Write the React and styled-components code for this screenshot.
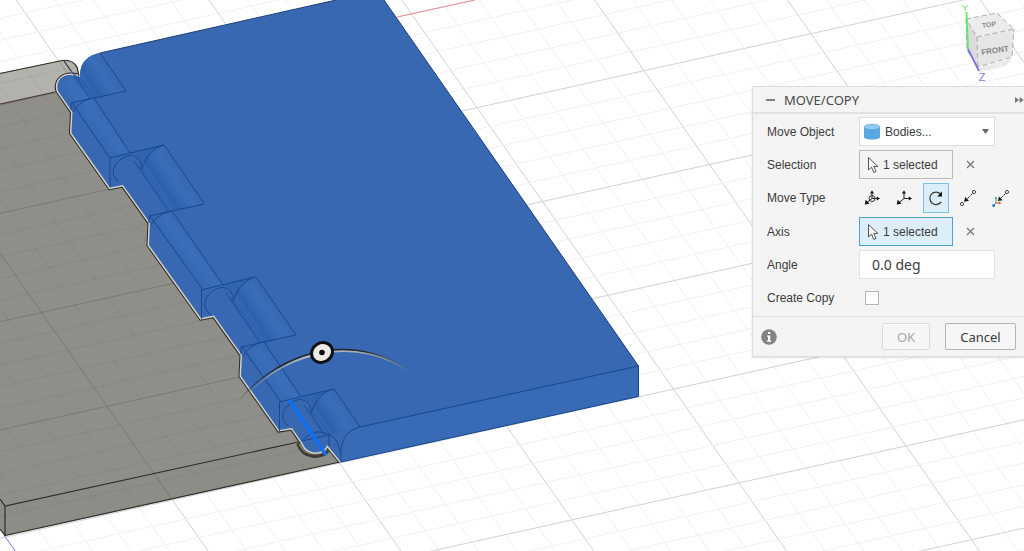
import React, { useState } from 'react';
import styled, { createGlobalStyle } from 'styled-components';

const GlobalStyle = createGlobalStyle`
* { box-sizing: border-box; }
body {
  margin: 0;
  overflow: hidden;
  background: #fff;
  font-family: "Liberation Sans", Arial, sans-serif;
}
`

const Workspace = styled.main`
position: relative;
min-height: 100vh;
overflow: hidden;
`

const Canvas = styled.svg`
display: block;
width: 100%;
height: 100vh;
`

const Cube = styled.svg`
position: absolute;
top: 0;
right: 0;
width: 84px;
height: 84px;
`

const Dialog = styled.form`
position: absolute;
top: 86px;
right: 0;
width: 272px;
background: #f4f4f4;
border: 1px solid #dcdcdc;
border-right: 0;
box-shadow: 0 1px 2px rgba(0, 0, 0, 0.12);
color: #3c3c3c;
font-size: 12px;
`

const Header = styled.header`
display: flex;
align-items: center;
height: 27px;
padding-left: 12px;
border-bottom: 2px solid #e2e2e2;
`

const Title = styled.h1`
flex: 1;
margin: 0 0 0 8px;
font: 400 13px "Noto Sans", sans-serif;
color: #4a4a4a;
`

const PlainButton = styled.button`
display: flex;
padding: 0;
border: 0;
background: none;
color: #777;
cursor: pointer;
`

const Fields = styled.div`
display: flex;
flex-direction: column;
gap: 4px;
padding: 3px 0 4px 14px;
`

const Row = styled.div`
display: grid;
grid-template-columns: 92px 1fr;
align-items: center;
min-height: 29px;
`

const Control = styled.div`
display: flex;
align-items: center;
position: relative;
`

const Select = styled.select`
appearance: none;
width: 136px;
height: 29px;
padding: 0 24px 0 25px;
border: 1px solid #dedede;
border-radius: 0;
background: #fff;
color: #3c3c3c;
font: inherit;
`

const SelectIcon = styled.svg`
position: absolute;
left: ${p => p.$left}px;
pointer-events: none;
`

const Picker = styled.button`
display: flex;
align-items: center;
gap: 4px;
width: 94px;
height: 29px;
padding: 0 0 0 7px;
border: 1px solid ${p => (p.$active ? '#4aa3d0' : '#b9b9b9')};
background: ${p => (p.$active ? '#dceff8' : '#f4f4f4')};
color: #3c3c3c;
font: inherit;
white-space: nowrap;
cursor: pointer;
`

const ClearButton = styled(PlainButton)`
margin-left: 13px;
`

const TypeList = styled.div`
display: flex;
gap: 6px;
`

const TypeButton = styled.button`
display: flex;
align-items: center;
justify-content: center;
width: 26px;
height: 30px;
padding: 0;
border: 1px solid ${p => (p.$active ? '#7fbfe0' : 'transparent')};
background: ${p => (p.$active ? '#dceff8' : 'none')};
cursor: pointer;
`

const AngleInput = styled.input`
width: 136px;
height: 29px;
padding: 0 12px;
border: 1px solid #e4e4e4;
background: #fff;
color: #3c3c3c;
font: 14px "Noto Sans", sans-serif;
`

const Checkbox = styled.input`
appearance: none;
width: 14px;
height: 14px;
margin: 0 0 0 6px;
border: 1px solid #b4b4b4;
background: #fff;
&:checked {
  background: #4aa3d0;
}
`

const Footer = styled.footer`
display: flex;
align-items: center;
gap: 15px;
height: 40px;
padding: 0 8px;
border-top: 1px solid #dcdcdc;
`

const InfoButton = styled(PlainButton)`
margin-right: auto;
`

const ActionButton = styled.button`
width: ${p => p.$width}px;
height: 27px;
padding: 0;
border: 1px solid #b4b4b4;
border-radius: 2px;
background: #f6f6f6;
color: #3c3c3c;
font: 13px "Noto Sans", sans-serif;
cursor: pointer;
&:disabled {
  border-color: #dadada;
  color: #a8a8a8;
}
`

// ground plane, one major cell is split in 5
const ORIGIN = [477, 107.7];
const DOWN = [65.5, 93.8];
const ACROSS = [167, -37];

const Grid = ({ major, minor }) => {
  const lines = [];
  for (let i = -50; i <= 50; i++) {
    const k = i / 5;
    const color = i % 5 === 0 ? major : minor;
    const ax = ORIGIN[0] + DOWN[0] * k, ay = ORIGIN[1] + DOWN[1] * k;
    const bx = ORIGIN[0] + ACROSS[0] * k, by = ORIGIN[1] + ACROSS[1] * k;
    lines.push(
      <line key={`a${i}`} stroke={color} x1={ax - ACROSS[0] * 9} y1={ay - ACROSS[1] * 9} x2={ax + ACROSS[0] * 9} y2={ay + ACROSS[1] * 9} />,
      <line key={`b${i}`} stroke={color} x1={bx - DOWN[0] * 12} y1={by - DOWN[1] * 12} x2={bx + DOWN[0] * 12} y2={by + DOWN[1] * 12} />
    );
  }
  return <g>{lines}</g>;
};

const LEAF = 'M0 73 L62 60.5 Q72 59 77 67 L79 76 L340 462 L5 535.5 L0 529 Z';
const HINGE = 'M58 91 C55 80 64 72 75 76 L80 77 C80 62 88 55 100 53 L336 0 H384 L638.5 366 V396.5 L341 462 L327 445 C325 454 308 456 303 444 L292 428 L279 430 L241 376 L242 355 L214 315.5 L201 318 L149 245 L150 223 L123 185 L110 187.5 L71.5 133 L72.5 112 Z';
const HINGE_EDGE = 'M341 462 L327 445 C325 454 308 456 303 444 L292 428 L279 430 L241 376 L242 355 L214 315.5 L201 318 L149 245 L150 223 L123 185 L110 187.5 L71.5 133 L72.5 112 L58 91 C55 80 64 72 78 76';

const POCKETS = [
  { x: 100, y: 53, dx: 26, dy: 38 },
  { x: 164, y: 145, dx: 40, dy: 58 },
  { x: 256, y: 277, dx: 40, dy: 58 },
  { x: 334, y: 389, dx: 26, dy: 38 },
];
const KNUCKLE_STARTS = [[0, 0], [78, 113], [170, 244]];
const KNUCKLE_ENDS = [[0, 0], [91.5, 132], [169.5, 244]];
const KNUCKLE_LENGTHS = [[36, 55], [51, 74], [37, 55]];

const Pocket = ({ x, y, dx, dy }) => (
  <g transform={`translate(${x} ${y})`}>
    <path fill="url(#pocket)" stroke="none" d={`M0 0 L${dx} ${dy} L${dx - 31} ${dy + 8} L-20 22 C-20 9 -12 2 0 0 Z`} />
    <path d={`M-21 24 L${dx - 29} ${dy + 8}`} stroke="#295dac" />
    <path d={`M-26 20 L${dx - 33} ${dy + 9}`} stroke="#2659a6" />
    <path d={`M-30 16 L${dx - 36} ${dy + 8}`} stroke="#1d4f9c" />
    <path d={`M0 0 L${dx} ${dy}`} />
  </g>
);

const Scene = () => (
  <Canvas viewBox="0 0 1024 551" preserveAspectRatio="xMinYMin slice" aria-hidden="true">
    <defs>
      <clipPath id="leaf"><path d={LEAF} /></clipPath>
      <linearGradient id="pocket" gradientUnits="userSpaceOnUse" x1="-23" y1="16" x2="1" y2="0">
        <stop offset="0" stopColor="#3467b3" />
        <stop offset="0.15" stopColor="#2d5fab" />
        <stop offset="0.4" stopColor="#3768b2" />
        <stop offset="0.65" stopColor="#3a6db8" />
        <stop offset="1" stopColor="#3768b1" />
      </linearGradient>
      <linearGradient id="pin" gradientUnits="userSpaceOnUse" x1="76" y1="112" x2="94" y2="98">
        <stop offset="0" stopColor="#3567b2" />
        <stop offset="0.6" stopColor="#3b6eb9" />
        <stop offset="1" stopColor="#3668b2" />
      </linearGradient>
      <linearGradient id="arc" gradientUnits="userSpaceOnUse" x1="236" y1="0" x2="412" y2="0">
        <stop offset="0" stopColor="#222" stopOpacity="0" />
        <stop offset="0.25" stopColor="#222" />
        <stop offset="0.7" stopColor="#222" />
        <stop offset="1" stopColor="#555" stopOpacity="0" />
      </linearGradient>
      <linearGradient id="arcGlow" gradientUnits="userSpaceOnUse" x1="236" y1="0" x2="412" y2="0">
        <stop offset="0" stopColor="#aaa" stopOpacity="0" />
        <stop offset="0.4" stopColor="#b8bcc2" />
        <stop offset="0.8" stopColor="#9aa4b4" />
        <stop offset="1" stopColor="#888" stopOpacity="0" />
      </linearGradient>
    </defs>

    <Grid major="#d2d2d2" minor="#f1f1f1" />
    <path d="M397 17 L475 0" stroke="#f08e97" />
    <path d="M4 535 L16 552" stroke="#8284ee" />

    <path d={LEAF} fill="#8f8e89" />
    <path d="M0 73 L62 60.5 Q72 59 77 67 L78 76 Q66 70 57 80 Q53 86 55 92 L0 104 Z" fill="#b3b2ac" />
    <path d="M5 506 L303 441 L340 462 L5 535.5 L0 529 V499 Z" fill="#8c8d87" />
    <g clipPath="url(#leaf)">
      <Grid major="rgba(40,40,35,0.2)" minor="rgba(40,40,35,0.06)" />
    </g>
    <g fill="none" stroke="#2f2d2a" strokeWidth="1.2">
      <path d="M0 73.5 L62 60.5 Q72 59 77 67 L79 76" />
      <path d="M64 61 L71 71" />
      <path d="M0 104 L55 92" stroke="#4d3435" />
      <path d="M0 499 L5 506 L303 441" />
      <path d="M5 506 V535.5 L340 462" />
      <path d="M0 529 L5 535.5" />
    </g>

    <path d={HINGE_EDGE} fill="none" stroke="#292824" strokeWidth="5" />
    <path d="M299 443 C304 458 322 457 327 450" fill="none" stroke="#3a3935" strokeWidth="6" />
    <path d="M300 444 C305 456 321 455 326 449" fill="none" stroke="#77766f" strokeWidth="3" />
    <path d={HINGE_EDGE} fill="none" stroke="#d2d0c8" strokeWidth="3" />
    <path d={HINGE} fill="#3768b1" />
    <path d="M360 427 L638.5 366 V396.5 L341 462 V449 Q344 431 360 427 Z" fill="#386ab5" />

    <path d="M59 84 L75 76 L94 98 L76 112 Z" fill="url(#pin)" />
    <g fill="none" stroke="#17488f">
      {POCKETS.map(p => <Pocket key={p.x} {...p} />)}
      {KNUCKLE_STARTS.map(([x, y], i) => {
        const [lx, ly] = KNUCKLE_LENGTHS[i];
        return (
          <g key={x} transform={`translate(${x} ${y})`}>
            <path fill="url(#pin)" stroke="none" d={`M76 112 L94 98 L${94 + lx} ${98 + ly} L${74 + lx} ${103 + ly} Z`} />
            <path d="M71 110 V103 L94 98 L126 91" />
            <path d="M73 112 C77 105 84 99 94 98" />
            <path d={`M94 98 L${94 + lx} ${98 + ly} M72 103 L${74 + lx} ${103 + ly}`} />
          </g>
        );
      })}
      {KNUCKLE_ENDS.map(([x, y]) => (
        <g key={x} transform={`translate(${x} ${y})`}>
          <path fill="#3163ae" stroke="none" d="M130 153 L164 145 Q148 150 143 164 Q139 154 130 153 Z" />
          <path d="M110 187 V158 L130 153 L164 145" />
          <path d="M119 182 C109 176 113 163 123 158 C133 152 141 157 142 169" />
          <path d="M142 169 C145 157 153 148 164 145" />
        </g>
      ))}
      <path d="M78 76 L94 98 M83 80 L98 98" stroke="#2a5eae" />
      <path d="M360 427 L638.5 366" />
      <path d="M360 427 Q343 431 341 449 V462" />
      <path d="M302 441 C312 430 322 430 332 436 Q339 442 340 452 M302 441 L329 435 V446" />
      <path d="M638.5 366 V396.5 L341 462" />
    </g>
    <path d="M100 53 L336 0 M384 0 L638.5 366" fill="none" stroke="#1c3f78" />

    <path d="M289 400 L326 455" stroke="#0b72f5" strokeWidth="3.2" />
    <path d="M238 404 C262 375 292 359 322 353 C356 347 388 355 412 374" fill="none" stroke="url(#arcGlow)" strokeWidth="2" />
    <path d="M237 403 C261 374 291 357 322 351 C356 346 388 354 412 373" fill="none" stroke="url(#arc)" strokeWidth="1.6" />
    <ellipse cx="322" cy="352.5" rx="10.8" ry="9.6" fill="#eceae4" stroke="#0c0f14" strokeWidth="3" transform="rotate(-30 322 352.5)" />
    <circle cx="322" cy="352.5" r="2.8" fill="#0c0f14" />
  </Canvas>
);

const ViewCube = () => (
  <Cube viewBox="940 0 84 84" aria-label="View cube">
    <path d="M967 50 L978 68 L1012 58 L1006 66 L980 72 Z" fill="#ddd" opacity="0.6" />
    <path d="M966 19 L997 13 L1014 29 L977 37 Z" fill="#ececec" />
    <path d="M966 19 L977 37 L978 67 L967 50 Z" fill="#dcdcdc" />
    <path d="M977 37 L1014 29 L1012 57 L978 67 Z" fill="#e6e6e6" />
    <path d="M966 19 L997 13 L1014 29 L977 37 Z M977 37 L978 67 M966 19 L967 50 L978 67 L1012 57 L1014 29" fill="none" stroke="#999" strokeWidth="0.8" strokeDasharray="5 3" />
    <path d="M966.5 12 L968 49" stroke="#63e563" strokeWidth="1.8" />
    <path d="M968 49 L979 71" stroke="#7a78e0" strokeWidth="1.8" />
    <g fontFamily="Liberation Sans, sans-serif" textAnchor="middle">
      <text x="965" y="11" fontSize="9" fill="#63e563">Y</text>
      <text x="982" y="81" fontSize="11" fill="#7a78e0">Z</text>
      <text x="989" y="27" fontSize="7" fontWeight="700" fill="#8c8c8c" transform="rotate(-8 989 25)">TOP</text>
      <text x="995" y="53" fontSize="8" fontWeight="700" fill="#868686" transform="rotate(-8 995 50)">FRONT</text>
    </g>
  </Cube>
);

const CursorIcon = () => (
  <svg width="12" height="18" viewBox="0 0 12 18" fill="#fafafa" stroke="#555" strokeWidth="1">
    <path d="M1.5 1.5 V14 L4.5 11.2 L6.8 16.5 L9 15.4 L6.8 10.4 H10.8 Z" />
  </svg>
);

const CloseIcon = () => (
  <svg width="9" height="9" viewBox="0 0 9 9" stroke="#777" strokeWidth="1.2">
    <path d="M1 1 L8 8 M8 1 L1 8" />
  </svg>
);

const Triad = ({ children }) => (
  <g>
    <path d="M10 10.5 V4 M10 10.5 H16 M10 10.5 L5 14.5" stroke="#222" />
    <path d="M10 2.2 L12 5.6 H8 Z M18 10.5 L14.8 8.5 V12.5 Z M2.8 16.4 L3.6 11.8 L7.6 15.8 Z" fill="#111" />
    {children}
  </g>
);

const TYPES = [
  { name: 'Free Move', icon: <Triad><circle cx="10" cy="10.5" r="3" stroke="#333" fill="none" /></Triad> },
  { name: 'Translate', icon: <Triad /> },
  {
    name: 'Rotate',
    icon: (
      <g>
        <path d="M14.5 6 A6.2 6.2 0 1 0 15.2 13.8" fill="none" stroke="#333" strokeWidth="1.2" />
        <path d="M16 3.5 V8.6 H11.2 Z" fill="#111" />
      </g>
    ),
  },
  {
    name: 'Point to Point',
    icon: (
      <g>
        <circle cx="4" cy="16" r="1.6" fill="none" stroke="#444" />
        <circle cx="16" cy="4" r="1.6" fill="none" stroke="#444" />
        <path d="M14.5 5.5 L8 12" stroke="#222" strokeDasharray="3 1" />
        <path d="M6 13.8 L7.2 9 L11 12.8 Z" fill="#111" />
      </g>
    ),
  },
  {
    name: 'Point to Position',
    icon: (
      <g>
        <circle cx="17" cy="4" r="1.6" fill="none" stroke="#444" />
        <path d="M15.5 5.5 L10 11" stroke="#222" strokeDasharray="3 1" />
        <path d="M8 13 L9 8.6 L12.6 12.2 Z" fill="#111" />
        <path d="M6 15 V10.5" stroke="#3fa65a" />
        <path d="M6 8.4 L7.6 11 H4.4 Z" fill="#3fa65a" />
        <path d="M6 15 H9" stroke="#dd5145" />
        <path d="M11.5 15 L8.8 13.4 V16.6 Z" fill="#dd5145" />
        <path d="M6 15 L4 17" stroke="#2c7fc4" />
        <circle cx="3.6" cy="17.4" r="1.5" fill="#2c7fc4" />
      </g>
    ),
  },
];

const MoveDialog = () => {
  const [type, setType] = useState('Rotate');
  const [angle, setAngle] = useState('0.0 deg');
  const [copy, setCopy] = useState(false);

  return (
    <Dialog aria-label="Move/Copy" onSubmit={e => e.preventDefault()}>
      <Header>
        <PlainButton type="button" aria-label="Collapse">
          <svg width="11" height="12" viewBox="0 0 11 12"><path d="M1 5 H10 V7 H1 Z" fill="#808080" /></svg>
        </PlainButton>
        <Title>MOVE/COPY</Title>
        <PlainButton type="button" aria-label="Dock">
          <svg width="9" height="8" viewBox="0 0 9 8"><path d="M0 1 L4.2 4 L0 7 Z M4.6 1 L8.8 4 L4.6 7 Z" fill="#777" /></svg>
        </PlainButton>
      </Header>

      <Fields>
        <Row>
          <label htmlFor="object">Move Object</label>
          <Control>
            <Select id="object">
              <option>Bodies...</option>
            </Select>
            <SelectIcon $left={4} width="18" height="18" viewBox="0 0 18 18">
              <path d="M1 4 V14 C1 17.4 17 17.4 17 14 V4 Z" fill="#58a7e0" />
              <ellipse cx="9" cy="4" rx="8" ry="2.8" fill="#8fcaf2" stroke="#4b98d0" strokeWidth="0.6" />
            </SelectIcon>
            <SelectIcon $left={123} width="7" height="5" viewBox="0 0 7 5">
              <path d="M0 0 H7 L3.5 5 Z" fill="#666" />
            </SelectIcon>
          </Control>
        </Row>
        <Row>
          <span>Selection</span>
          <Control>
            <Picker type="button"><CursorIcon />1 selected</Picker>
            <ClearButton type="button" aria-label="Clear selection"><CloseIcon /></ClearButton>
          </Control>
        </Row>
        <Row>
          <span>Move Type</span>
          <TypeList>
            {TYPES.map(t => (
              <TypeButton key={t.name} type="button" aria-label={t.name} $active={t.name === type} onClick={() => setType(t.name)}>
                <svg width="20" height="20" viewBox="0 0 20 20">{t.icon}</svg>
              </TypeButton>
            ))}
          </TypeList>
        </Row>
        <Row>
          <span>Axis</span>
          <Control>
            <Picker type="button" $active><CursorIcon />1 selected</Picker>
            <ClearButton type="button" aria-label="Clear axis"><CloseIcon /></ClearButton>
          </Control>
        </Row>
        <Row>
          <label htmlFor="angle">Angle</label>
          <Control>
            <AngleInput id="angle" value={angle} onChange={e => setAngle(e.target.value)} />
          </Control>
        </Row>
        <Row>
          <label htmlFor="copy">Create Copy</label>
          <Control>
            <Checkbox id="copy" type="checkbox" checked={copy} onChange={e => setCopy(e.target.checked)} />
          </Control>
        </Row>
      </Fields>

      <Footer>
        <InfoButton type="button" aria-label="Info">
          <svg width="16" height="16" viewBox="0 0 16 16">
            <circle cx="8" cy="8" r="7.8" fill="#848484" />
            <path d="M7 3 H9.2 V5 H7 Z M6 6.4 H9.2 V11.4 H10.2 V12.8 H6 V11.4 H7 V7.8 H6 Z" fill="#fff" />
          </svg>
        </InfoButton>
        <ActionButton type="submit" disabled $width={48}>OK</ActionButton>
        <ActionButton type="button" $width={71}>Cancel</ActionButton>
      </Footer>
    </Dialog>
  );
};

const App = () => (
  <Workspace>
    <GlobalStyle />
    <Scene />
    <ViewCube />
    <MoveDialog />
  </Workspace>
);

export default App;
